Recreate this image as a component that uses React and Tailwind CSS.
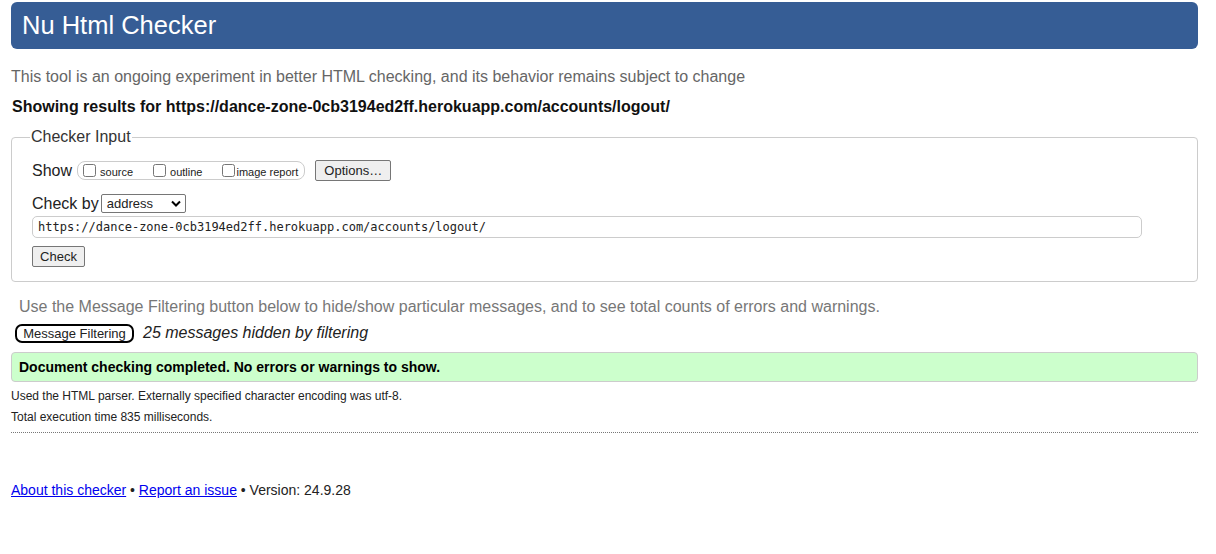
import React from 'react';

export default function App() {
  const url = 'https://dance-zone-0cb3194ed2ff.herokuapp.com/accounts/logout/';

  return (
    <div className="min-h-[554px] bg-white pl-[11px] pr-[18px] pt-[2px] font-['Liberation_Sans',Arial,sans-serif] text-[#222]">
      <h1 className="flex h-[47px] items-center rounded-[6px] bg-[#365d95] pl-[11px] text-[25.5px] leading-none text-white">
        Nu Html Checker
      </h1>

      <p className="mt-[19px] text-[16px] leading-[18px] text-[#666]">
        This tool is an ongoing experiment in better HTML checking, and its behavior remains subject to change
      </p>
      <p className="mt-[12px] pl-[1px] text-[16px] font-bold leading-[18px] text-[#111]">
        Showing results for {url}
      </p>

      <fieldset className="mt-[12px] rounded-[4px] border border-[#ccc] pb-[13px] pl-[20px] pr-[55px]">
        <legend className="ml-[-2px] px-[1px] text-[16px] leading-[18px] text-[#333]">Checker Input</legend>

        <div className="mt-[14px] flex items-center">
          <span className="text-[16px] leading-[18px]">Show</span>
          <div className="ml-[5px] flex h-[19px] items-center rounded-[8px] border border-[#ccc] pl-[5px] pr-[6px] text-[11px]">
            <label className="flex items-center">
              <input type="checkbox" className="m-0 h-[13px] w-[13px]" />
              <span className="ml-[4px] mt-[3px]">source</span>
            </label>
            <label className="ml-[20px] flex items-center">
              <input type="checkbox" className="m-0 h-[13px] w-[13px]" />
              <span className="ml-[4px] mt-[3px]">outline</span>
            </label>
            <label className="ml-[20px] flex items-center">
              <input type="checkbox" className="m-0 h-[13px] w-[13px]" />
              <span className="ml-[1px] mt-[3px]">image report</span>
            </label>
          </div>
          <button className="ml-[10px] h-[21px] w-[76px] rounded-[2px] border border-[#767676] bg-[#efefef] text-[13px]">
            Options…
          </button>
        </div>

        <div className="mt-[13px] flex items-center">
          <span className="text-[16px] leading-[18px]">Check by</span>
          <div className="ml-[2px] flex h-[19px] w-[85px] items-center justify-between rounded-[2px] border border-[#767676] bg-white pl-[5px] pr-[4px] text-[13px]">
            <span>address</span>
            <svg width="10" height="7" viewBox="0 0 10 7">
              <path d="M1 1.5l4 4 4-4" fill="none" stroke="#000" strokeWidth="2" />
            </svg>
          </div>
        </div>

        <div className="mt-[3px] flex h-[22px] w-[1110px] items-center rounded-[5px] border border-[#ccc] pl-[5px] font-['DejaVu_Sans_Mono','Liberation_Mono',monospace] text-[12px]">
          {url}
        </div>

        <button className="mt-[8px] h-[21px] w-[53px] rounded-[2px] border border-[#767676] bg-[#efefef] text-[13px]">
          Check
        </button>
      </fieldset>

      <p className="mt-[16px] pl-[8px] text-[16px] leading-[18px] text-[#777]">
        Use the Message Filtering button below to hide/show particular messages, and to see total counts of errors and warnings.
      </p>
      <div className="mt-[5px] flex items-center pl-[4px]">
        <button className="h-[19px] w-[119px] rounded-[7px] border-2 border-black bg-white text-[13px] leading-none">
          Message Filtering
        </button>
        <span className="ml-[9px] text-[16px] italic">25 messages hidden by filtering</span>
      </div>

      <div className="mt-[7px] flex h-[30px] items-center rounded-[4px] border border-[#ccc] bg-[#ccffcc] pl-[7px] text-[14px] font-bold text-black">
        Document checking completed. No errors or warnings to show.
      </div>

      <p className="mt-[7px] text-[12px] leading-[14px]">
        Used the HTML parser. Externally specified character encoding was utf-8.
      </p>
      <p className="mt-[7px] text-[12px] leading-[14px]">Total execution time 835 milliseconds.</p>

      <div className="mt-[8px] border-t border-dotted border-[#777]" />

      <p className="mt-[49px] text-[14px] leading-[16px] text-[#222]">
        <a href="#" className="text-[#0000ee] underline">About this checker</a>
        {' • '}
        <a href="#" className="text-[#0000ee] underline">Report an issue</a>
        {' • Version: 24.9.28'}
      </p>
    </div>
  );
}
